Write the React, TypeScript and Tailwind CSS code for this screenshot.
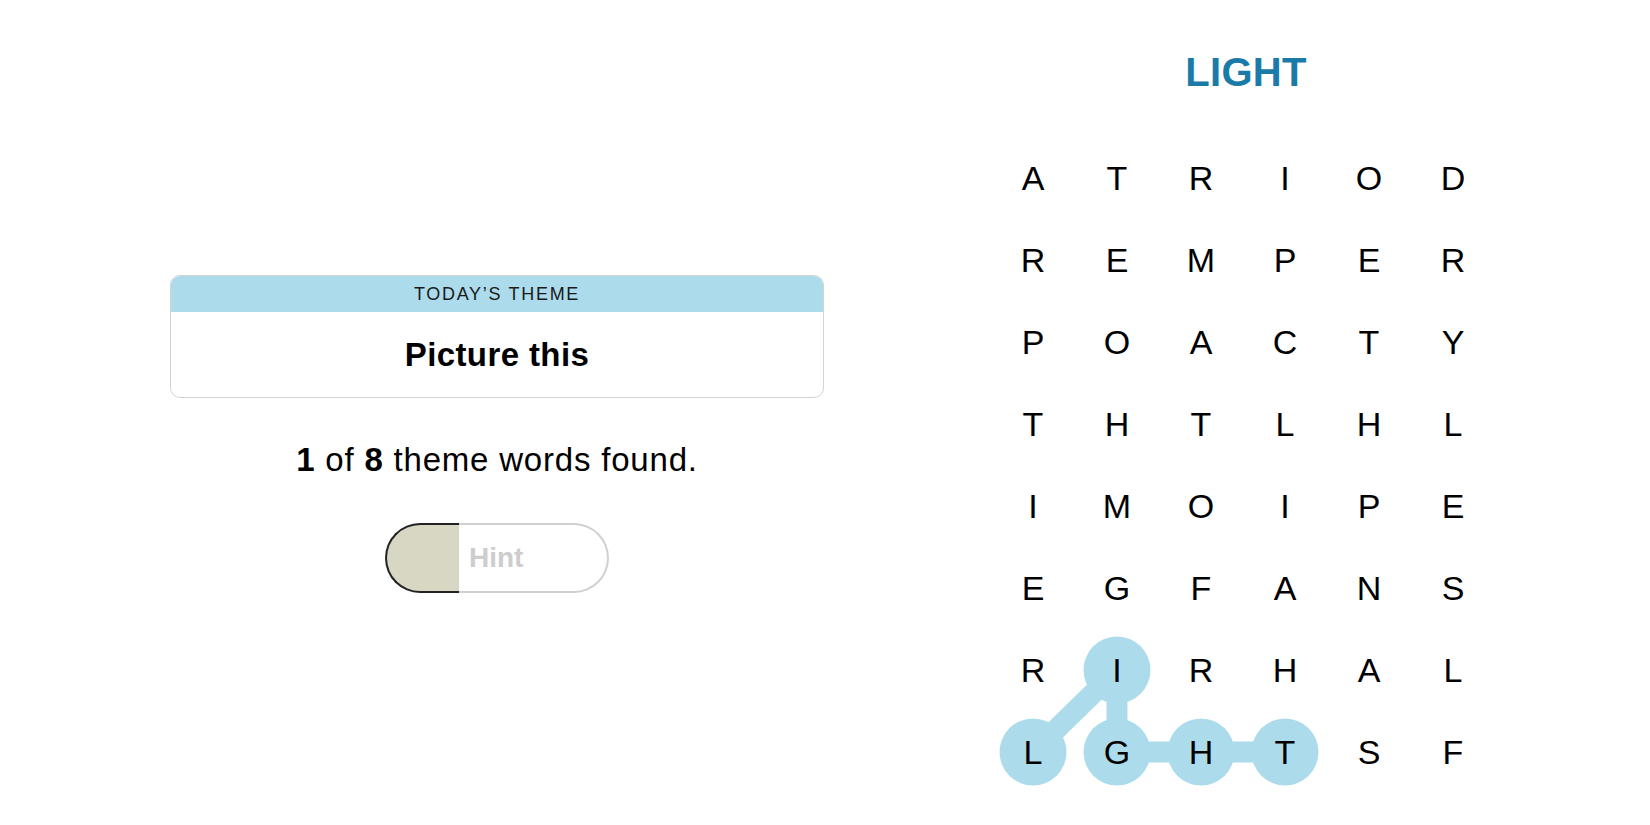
import React from 'react';

// Strands board: 6 columns x 8 rows
const board: string[] = [
  'ATRIOD',
  'REMPER',
  'POACTY',
  'THTLHL',
  'IMOIPE',
  'EGFANS',
  'RIRHAL',
  'LGHTSF',
];

// found word LIGHT as [col, row]
const found: [number, number][] = [
  [0, 7],
  [1, 6],
  [1, 7],
  [2, 7],
  [3, 7],
];

const CELL_W = 84;
const CELL_H = 82;

const cx = (c: number) => CELL_W / 2 + c * CELL_W;
const cy = (r: number) => CELL_H / 2 + r * CELL_H;

const ThemeCard = () => (
  <div className="w-[654px] rounded-[10px] border border-[#d3d3d3] overflow-hidden">
    <div className="h-[36px] bg-[#acdcec] flex items-center justify-center text-[18px] tracking-[1.7px] font-medium text-[#1a1a1a]">
      TODAY’S THEME
    </div>
    <div className="h-[85px] flex items-center justify-center text-[33px] font-bold tracking-[0.4px] text-black leading-none">
      Picture this
    </div>
  </div>
);

const HintButton = () => (
  <div className="mt-[47px] flex h-[70px] w-[224px]">
    <div className="w-[74px] h-full rounded-l-full border-2 border-r-0 border-[#222] bg-[#d8d7c4]" />
    <div className="flex-1 h-full rounded-r-full border-2 border-l-0 border-[#d0d0d0] flex items-center pl-[10px]">
      <span className="text-[28px] font-bold text-[#cdcdcd] leading-none">Hint</span>
    </div>
  </div>
);

const Board = () => {
  const rows = board.length;
  const cols = board[0].length;

  return (
    <div className="relative mt-[45px] w-[504px] h-[656px]">
      <svg className="absolute inset-0" width={cols * CELL_W} height={rows * CELL_H}>
        {found.slice(1).map(([c, r], i) => {
          const [pc, pr] = found[i];
          return (
            <line
              key={i}
              x1={cx(pc)}
              y1={cy(pr)}
              x2={cx(c)}
              y2={cy(r)}
              stroke="#acdcec"
              strokeWidth={21}
            />
          );
        })}
        {found.map(([c, r]) => (
          <circle key={`${c}-${r}`} cx={cx(c)} cy={cy(r)} r={33.5} fill="#acdcec" />
        ))}
      </svg>
      <div className="relative grid grid-cols-[repeat(6,84px)] grid-rows-[repeat(8,82px)]">
        {board.map((row, r) =>
          row.split('').map((ch, c) => (
            <div
              key={`${r}-${c}`}
              className="flex items-center justify-center text-[34px] leading-none text-black"
            >
              {ch}
            </div>
          ))
        )}
      </div>
    </div>
  );
};

export default function App() {
  return (
    <div className="w-[1650px] h-[825px] bg-white flex font-['Liberation_Sans',Arial,sans-serif] overflow-hidden">
      <div className="ml-[170px] pt-[275px] w-[654px] flex flex-col items-center">
        <ThemeCard />
        <p className="mt-[45px] text-[33px] leading-none tracking-[0.8px] text-black">
          <span className="font-bold">1</span> of <span className="font-bold">8</span> theme words found.
        </p>
        <HintButton />
      </div>
      <div className="ml-[167px] flex flex-col items-center">
        <h1 className="mt-[52px] pl-[6px] text-[40px] leading-[40px] font-bold tracking-[0.3px] text-[#1b7ba8]">LIGHT</h1>
        <Board />
      </div>
    </div>
  );
}
